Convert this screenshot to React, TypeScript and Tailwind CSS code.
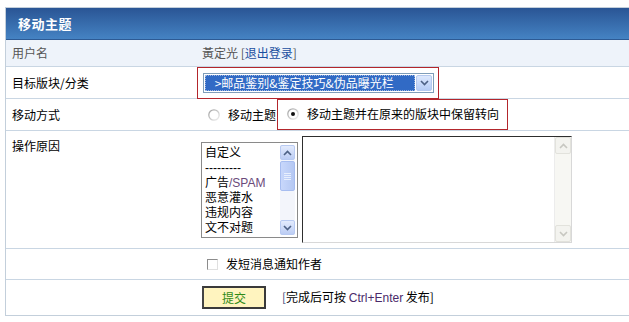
import React from "react";

const F = { fontFamily: '"Noto Sans CJK SC", "Liberation Sans", sans-serif' } as React.CSSProperties;
const FL = { fontFamily: '"Liberation Sans", "Noto Sans CJK SC", sans-serif' } as React.CSSProperties;

function Radio({ checked }: { checked?: boolean }) {
  return (
    <svg width="12" height="12" viewBox="0 0 12 12" className="shrink-0">
      <defs>
        <linearGradient id={checked ? "rg1" : "rg0"} x1="0" y1="0" x2="1" y2="1">
          <stop offset="0" stopColor="#a0a0a0" />
          <stop offset="1" stopColor="#f0f0f0" />
        </linearGradient>
      </defs>
      <circle cx="6" cy="6" r="5.2" fill="#fff" stroke={`url(#${checked ? "rg1" : "rg0"})`} strokeWidth="1.3" />
      {checked && <circle cx="6" cy="6" r="2" fill="#111" />}
    </svg>
  );
}

function ChevUp({ color }: { color: string }) {
  return (
    <svg width="9" height="6" viewBox="0 0 9 6">
      <path d="M1 5 L4.5 1.5 L8 5" fill="none" stroke={color} strokeWidth="1.6" />
    </svg>
  );
}
function ChevDown({ color }: { color: string }) {
  return (
    <svg width="9" height="6" viewBox="0 0 9 6">
      <path d="M1 1 L4.5 4.5 L8 1" fill="none" stroke={color} strokeWidth="1.6" />
    </svg>
  );
}

function Item({ children }: { children: React.ReactNode }) {
  return (
    <div className="h-[15.5px] leading-[15.5px] overflow-hidden whitespace-nowrap" style={FL}>
      {children}
    </div>
  );
}

export default function App() {
  return (
    <div className="w-[629px] h-[322px] overflow-hidden bg-white text-[12px] text-black" style={F}>
      <div className="mt-[7px] ml-[5px] w-[640px] border border-[#c3cfdb]">
        {/* header */}
        <div className="h-[32px] flex items-center pl-[12px] bg-gradient-to-b from-[#2a5595] to-[#4583c3] border-b border-[#2d5a94]">
          <span className="text-white font-bold text-[13px] tracking-[0.5px]">移动主题</span>
        </div>
        {/* row 1 */}
        <div className="h-[27px] flex items-center bg-[#eef3fa] border-b border-[#c9d6e3]">
          <div className="w-[190px] pl-[6px] text-[#555]">用户名</div>
          <div className="pl-[6px] text-[#555]">
            黃定光 <span>[</span>
            <span className="text-[#1a4fa0]">退出登录</span>
            <span>]</span>
          </div>
        </div>
        {/* row 2 */}
        <div className="h-[32px] flex items-center border-b border-[#c9d6e3]">
          <div className="w-[190px] pl-[6px]">目标版块/分类</div>
          <div className="pl-[1px]">
            <div className="w-[242px] h-[32px] border border-[#b3262c] flex items-center pl-[5px]">
              <div className="w-[231px] h-[20px] border border-[#7f9db9] flex items-center p-[1px] bg-white">
                <div className="flex-1 h-full bg-[#316ac5] text-white flex items-center pl-[6px] leading-none border border-dotted border-[#9cb6e0] whitespace-pre">
                  {" >邮品鉴别&鉴定技巧&伪品曝光栏"}
                </div>
                <div className="w-[16px] h-full ml-[1px] rounded-[2px] bg-gradient-to-b from-[#dde8fd] to-[#b6ccf5] border border-[#b5c9ef] flex items-center justify-center">
                  <ChevDown color="#4d6185" />
                </div>
              </div>
            </div>
          </div>
        </div>
        {/* row 3 */}
        <div className="h-[32px] flex items-stretch border-b border-[#c9d6e3]">
          <div className="w-[190px] pl-[6px] flex items-center">移动方式</div>
          <div className="pl-[12px] flex items-center">
            <Radio />
            <span className="ml-[8px] mr-[1px]">移动主题</span>
            <div className="h-[31px] mt-[-1px] border border-[#b3262c] flex items-center pl-[9px] pr-[8px]">
              <Radio checked />
              <span className="ml-[8px]">移动主题并在原来的版块中保留转向</span>
            </div>
          </div>
        </div>
        {/* row 4 */}
        <div className="h-[118px] flex items-start border-b border-[#c9d6e3]">
          <div className="w-[190px] pl-[6px] pt-[6px]">操作原因</div>
          <div className="pl-[5px] flex items-start">
            <div className="mt-[11px] w-[97px] h-[96px] border border-[#8a8a8a] p-[1px] flex bg-white">
              <div className="flex-1 flex flex-col pl-[2px] pt-[2px] overflow-hidden">
                <Item>自定义</Item>
                <Item>---------</Item>
                <Item>
                  广告<span className="text-[#6a4a7a]">/SPAM</span>
                </Item>
                <Item>恶意灌水</Item>
                <Item>违规内容</Item>
                <Item>文不对题</Item>
              </div>
              <div className="w-[15px] flex flex-col bg-[#f3f5fb] mr-[1px] mt-[1px] mb-[1px]">
                <div className="h-[15px] rounded-[2px] bg-gradient-to-b from-[#e3ebfd] to-[#bccdf4] border border-[#b8caf2] flex items-center justify-center">
                  <ChevUp color="#4d6185" />
                </div>
                <div className="h-[30px] mt-[1px] rounded-[2px] bg-gradient-to-r from-[#c8d7fb] to-[#b5c8f3] border border-[#a7bdf0] flex flex-col items-center justify-center gap-[1px]">
                  <div className="w-[7px] h-[1px] bg-[#e8effd]" />
                  <div className="w-[7px] h-[1px] bg-[#e8effd]" />
                  <div className="w-[7px] h-[1px] bg-[#e8effd]" />
                  <div className="w-[7px] h-[1px] bg-[#e8effd]" />
                </div>
                <div className="flex-1" />
                <div className="h-[15px] rounded-[2px] bg-gradient-to-b from-[#e3ebfd] to-[#bccdf4] border border-[#b8caf2] flex items-center justify-center">
                  <ChevDown color="#4d6185" />
                </div>
              </div>
            </div>
            <div className="mt-[5px] ml-[4px] w-[270px] h-[107px] border-t border-l border-[#2e2e2e] border-r border-b border-r-[#d8d8d8] border-b-[#d8d8d8] flex justify-end bg-white">
              <div className="w-[17px] flex flex-col bg-[#f7f7f3] border-l border-[#ececec]">
                <div className="h-[17px] bg-[#f3f3ef] border border-[#e2e2dc] rounded-[2px] flex items-center justify-center">
                  <ChevUp color="#c7c7c1" />
                </div>
                <div className="flex-1" />
                <div className="h-[17px] bg-[#f3f3ef] border border-[#e2e2dc] rounded-[2px] flex items-center justify-center">
                  <ChevDown color="#c7c7c1" />
                </div>
              </div>
            </div>
          </div>
        </div>
        {/* row 5 */}
        <div className="h-[31px] flex items-center border-b border-[#c9d6e3]">
          <div className="w-[190px]" />
          <div className="pl-[11px] flex items-center">
            <div className="w-[11px] h-[11px] border border-t-[#8c8c8c] border-l-[#8c8c8c] border-r-[#e0e0e0] border-b-[#e0e0e0] bg-white" />
            <span className="ml-[8px]">发短消息通知作者</span>
          </div>
        </div>
        {/* row 6 */}
        <div className="h-[35px] flex items-center">
          <div className="w-[190px]" />
          <div className="pl-[6px] flex items-center">
            <div className="w-[64px] h-[23px] border-2 border-[#3a3a3a] border-l-[#444] bg-[#fff4bf] flex items-center justify-center text-[#2f8a16]">
              提交
            </div>
            <span className="ml-[16px]">
              <span className="text-[#334a7a]">[</span>完成后可按{" "}
              <span className="text-[#4a2a6a]" style={{ fontFamily: '"Liberation Sans", sans-serif' }}>Ctrl+Enter</span> 发布]
            </span>
          </div>
        </div>
      </div>
    </div>
  );
}
